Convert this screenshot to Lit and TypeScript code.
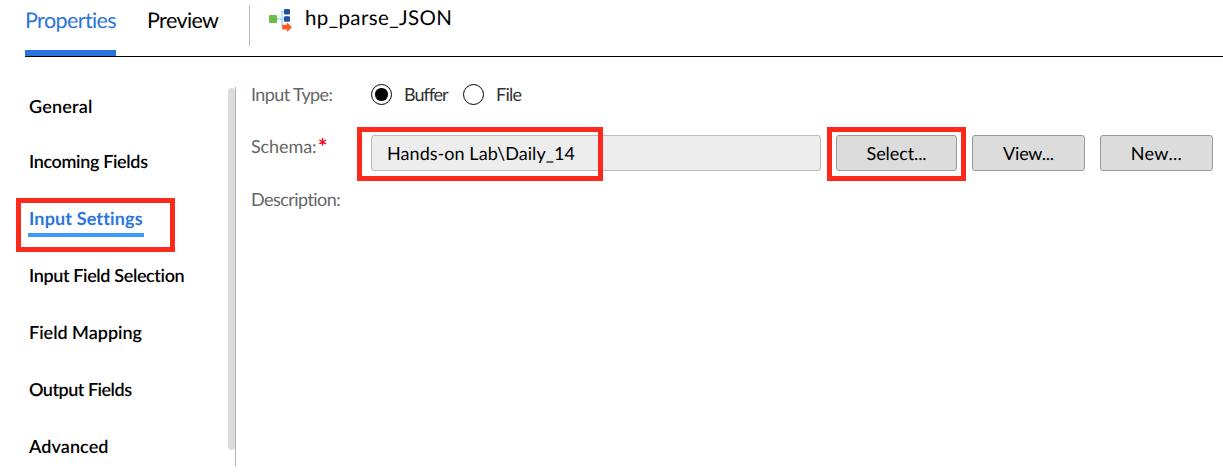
import { LitElement, html, css } from "lit";
import { customElement, property } from "lit/decorators.js";

/** One line of text whose tracking is adjusted so that it spans `span` pixels. */
@customElement("tracked-text")
class TrackedText extends LitElement {
  @property({ type: Number }) span = 0;
  @property() text = "";

  static styles = css`
    :host { display: inline-block; white-space: pre; text-rendering: geometricPrecision; }
  `;

  render() {
    return html`<span>${this.text}</span>`;
  }

  updated() {
    const el = this.renderRoot.querySelector("span")!;
    el.style.letterSpacing = "0px";
    const natural = el.getBoundingClientRect().width;
    el.style.letterSpacing = `${(this.span - natural) / (this.text.length - 1)}px`;
  }
}

const t = (text: string, span: number) =>
  html`<tracked-text .text=${text} .span=${span}></tracked-text>`;

const NAV: Array<[string, number, boolean?]> = [
  ["General", 63.5],
  ["Incoming Fields", 119],
  ["Input Settings", 113, true],
  ["Input Field Selection", 156],
  ["Field Mapping", 113],
  ["Output Fields", 103],
  ["Advanced", 79.5],
];

@customElement("app-root")
class AppRoot extends LitElement {
  static styles = css`
    :host {
      display: block;
      position: relative;
      width: 1223px;
      height: 473px;
      overflow: hidden;
      background: #fff;
      color: #000;
      font-family: Lato, sans-serif;
      font-size: 18px;
      line-height: 24px;
    }
    * { box-sizing: border-box; }
    header {
      display: flex;
      height: 57px;
      margin-left: 25px;
      border-bottom: 1px solid #000;
    }
    .tab {
      height: 56px;
      padding-top: 7px;
      font-size: 21.5px;
      line-height: 26px;
      margin-right: 31px;
      white-space: nowrap;
    }
    .tab.on { width: 91px; color: #2a74dd; border-bottom: 6px solid #2a74dd; }
    .tab.preview { width: 71px; }
    .rule { width: 1px; height: 41px; margin: 5px 18px 0 0; background: #b9b9b9; }
    .mapping { display: flex; font-size: 20.5px; line-height: 26px; padding-top: 5px; }
    .mapping svg { margin: 1px 11px 0 0; }
    .body { display: flex; }
    nav { width: 199px; padding: 37px 0 0 28px; font-weight: 600; }
    nav .item { display: flex; height: 57px; }
    nav .item:first-child { height: 55px; }
    nav .item.on { color: #2a74dd; font-weight: 700; }
    .item .label { height: 31px; padding-left: 1px; }
    .item.on .label { width: 116px; border-bottom: 4.5px solid #3b99fc; }
    .scroll { width: 8px; height: 379px; margin: 30px 0 0 29px; border-right: 1px solid #b2b2b2; padding-top: 1px; }
    .scroll i { display: block; width: 7px; height: 362px; border-radius: 4px; background: #dcdcdc; }
    .form { flex: 1; padding: 25px 0 0 15px; color: #666; }
    .row { display: flex; }
    .name { width: 120px; }
    .types { height: 52px; color: #333; }
    .types .name { color: #666; }
    .radio {
      display: flex;
      align-items: center;
      justify-content: center;
      width: 21px;
      height: 21px;
      margin: 2px 12px 0 0;
      border: 1.3px solid #000;
      border-radius: 50%;
    }
    .radio.on::after { content: ""; width: 12.5px; height: 12.5px; border-radius: 50%; background: #000; }
    .buffer { width: 59px; }
    .schema { height: 53px; }
    .schema .name { display: flex; }
    .star { color: #f00016; margin-left: 1.5px; font-size: 22px; font-weight: 700; line-height: 26px; }
    .value, .btn { height: 36px; margin-top: 1px; border-radius: 3px; color: #000; }
    .value { width: 450px; padding-left: 15px; background: #ededed; border: 1px solid #bcbcbc; line-height: 34px; }
    .btn {
      width: 113px;
      margin-left: 15px;
      text-align: center;
      font: inherit;
      padding: 0;
      line-height: 34px;
      background: #dcdcdc;
      border: 1px solid #999;
    }
    .btn.select { width: 121px; }
    .mark { position: absolute; border: 5px solid #fd2a1c; height: 54px; }
    .mark.m1 { left: 16px; top: 198px; width: 159px; }
    .mark.m2 { left: 357px; top: 127px; width: 246px; }
    .mark.m3 { left: 827px; top: 127px; width: 139px; }
  `;

  render() {
    return html`
      <header>
        <div class="tab on">${t("Properties", 92)}</div>
        <div class="tab preview">${t("Preview", 72)}</div>
        <div class="rule"></div>
        <div class="mapping">
          <svg width="26" height="26" viewBox="0 0 26 26">
            <path d="M8 13H20M14 13V5.5H18M14 13V21H17" fill="none" stroke="#a5daf8" stroke-width="1.4"/>
            <rect x="1" y="9" width="8" height="8" rx="1" fill="#6cbd45"/>
            <rect x="16" y="3" width="6" height="5.5" rx="1.2" fill="#2450a4"/>
            <rect x="16" y="10.3" width="6" height="5.5" rx="1.2" fill="#2450a4"/>
            <path d="M14.3 18.8H19V16.4L24 21.2L19 26V23.4H14.3Z" fill="#ff5a22"/>
          </svg>
          ${t("hp_parse_JSON", 147)}
        </div>
      </header>
      <div class="body">
        <nav>
          ${NAV.map(([label, span, on]) => html`
            <div class="item ${on ? "on" : ""}"><div class="label">${t(label, span)}</div></div>`)}
        </nav>
        <div class="scroll"><i></i></div>
        <div class="form">
          <div class="row types">
            <div class="name">${t("Input Type:", 82)}</div>
            <div class="radio on"></div><div class="buffer">${t("Buffer", 44)}</div>
            <div class="radio"></div><div>${t("File", 26)}</div>
          </div>
          <div class="row schema">
            <div class="name">${t("Schema:", 65.5)}<span class="star">*</span></div>
            <div class="value">${t("Hands-on Lab\\Daily_14", 188)}</div>
            <button class="btn select">${t("Select...", 60)}</button>
            <button class="btn">${t("View...", 51)}</button>
            <button class="btn">${t("New...", 51)}</button>
          </div>
          <div class="row">${t("Description:", 90)}</div>
        </div>
      </div>
      <div class="mark m1"></div>
      <div class="mark m2"></div>
      <div class="mark m3"></div>
    `;
  }
}
